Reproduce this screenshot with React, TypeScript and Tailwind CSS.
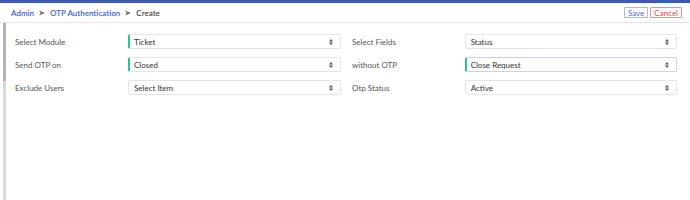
import React from "react";

function Sep() {
  return (
    <svg width="6" height="6" viewBox="0 0 7 6" className="mx-[5px]">
      <path d="M0 0 L7 3 L0 6 L2 3 Z" fill="#6b6b6b" />
    </svg>
  );
}

function Arrows() {
  return (
    <svg width="4" height="6" viewBox="0 0 4 6">
      <path d="M0 2.5 L2 0 L4 2.5 Z" fill="#555" />
      <path d="M0 3.5 L2 6 L4 3.5 Z" fill="#555" />
    </svg>
  );
}

type SelProps = { value: string; accent?: boolean; focus?: boolean };

function Sel({ value, accent, focus }: SelProps) {
  return (
    <div
      className={
        "h-[15px] w-[213px] flex items-center justify-between rounded-[2px] border bg-white pr-[7px] " +
        (focus ? "border-[#c9d0f2] " : "border-[#e5e5e5] ") +
        (accent ? "border-l-2 border-l-[#22c98b] pl-[4px]" : "pl-[5px]")
      }
    >
      <span className="text-[8px] text-[#333]">{value}</span>
      <Arrows />
    </div>
  );
}

function Row({ label, children }: { label: string; children: React.ReactNode }) {
  return (
    <div className="flex items-center">
      <div className="w-[113px] text-[8px] text-[#555]">{label}</div>
      {children}
    </div>
  );
}

export default function App() {
  return (
    <div className="w-[690px] h-[200px] bg-white overflow-hidden font-['Lato',sans-serif]">
      <div className="h-[3px] bg-[#3f5aa8]" />
      <div className="h-[20px] flex items-center justify-between border-b border-[#e3e3e3] pl-[11px] pr-[8px]">
        <div className="flex items-center text-[8px] font-semibold">
          <span className="text-[#3b63cf]">Admin</span>
          <Sep />
          <span className="text-[#3b63cf]">OTP Authentication</span>
          <Sep />
          <span className="text-[#444]">Create</span>
        </div>
        <div className="flex items-center gap-[2px]">
          <button className="h-[11px] px-[3px] flex items-center border border-[#a8b8ee] rounded-[1px] text-[8px] leading-none text-[#4a6fd8]">
            Save
          </button>
          <button className="h-[11px] px-[3px] flex items-center border border-[#ec8d8d] rounded-[1px] text-[8px] leading-none text-[#e04848]">
            Cancel
          </button>
        </div>
      </div>
      <div className="flex h-[177px]">
        <div className="w-[3px]" />
        <div className="w-[3px] bg-[#d9d9d9] flex flex-col">
          <div className="h-[58px] bg-[#b3b3b3]" />
        </div>
        <div className="grid grid-cols-[326px_325px] gap-x-[11px] gap-y-[8px] pl-[9px] pt-[11px] content-start">
          <Row label="Select Module">
            <Sel value="Ticket" accent />
          </Row>
          <Row label="Select Fields">
            <Sel value="Status" />
          </Row>
          <Row label="Send OTP on">
            <Sel value="Closed" accent />
          </Row>
          <Row label="without OTP">
            <Sel value="Close Request" accent focus />
          </Row>
          <Row label="Exclude Users">
            <Sel value="Select Item" />
          </Row>
          <Row label="Otp Status">
            <Sel value="Active" />
          </Row>
        </div>
      </div>
    </div>
  );
}
